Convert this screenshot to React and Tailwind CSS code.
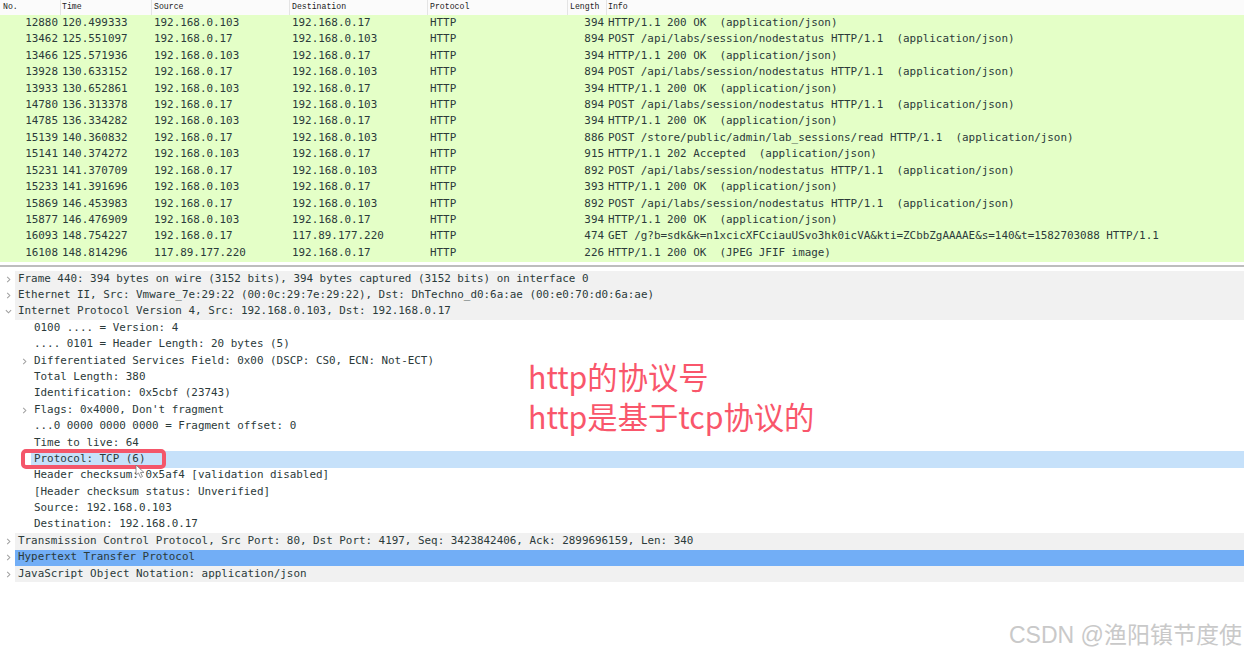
const mono = "font-['DejaVu_Sans_Mono','Liberation_Mono',monospace]";

const packets = [
  ["12880", "120.499333", "192.168.0.103", "192.168.0.17", "394", "HTTP/1.1 200 OK  (application/json)"],
  ["13462", "125.551097", "192.168.0.17", "192.168.0.103", "894", "POST /api/labs/session/nodestatus HTTP/1.1  (application/json)"],
  ["13466", "125.571936", "192.168.0.103", "192.168.0.17", "394", "HTTP/1.1 200 OK  (application/json)"],
  ["13928", "130.633152", "192.168.0.17", "192.168.0.103", "894", "POST /api/labs/session/nodestatus HTTP/1.1  (application/json)"],
  ["13933", "130.652861", "192.168.0.103", "192.168.0.17", "394", "HTTP/1.1 200 OK  (application/json)"],
  ["14780", "136.313378", "192.168.0.17", "192.168.0.103", "894", "POST /api/labs/session/nodestatus HTTP/1.1  (application/json)"],
  ["14785", "136.334282", "192.168.0.103", "192.168.0.17", "394", "HTTP/1.1 200 OK  (application/json)"],
  ["15139", "140.360832", "192.168.0.17", "192.168.0.103", "886", "POST /store/public/admin/lab_sessions/read HTTP/1.1  (application/json)"],
  ["15141", "140.374272", "192.168.0.103", "192.168.0.17", "915", "HTTP/1.1 202 Accepted  (application/json)"],
  ["15231", "141.370709", "192.168.0.17", "192.168.0.103", "892", "POST /api/labs/session/nodestatus HTTP/1.1  (application/json)"],
  ["15233", "141.391696", "192.168.0.103", "192.168.0.17", "393", "HTTP/1.1 200 OK  (application/json)"],
  ["15869", "146.453983", "192.168.0.17", "192.168.0.103", "892", "POST /api/labs/session/nodestatus HTTP/1.1  (application/json)"],
  ["15877", "146.476909", "192.168.0.103", "192.168.0.17", "394", "HTTP/1.1 200 OK  (application/json)"],
  ["16093", "148.754227", "192.168.0.17", "117.89.177.220", "474", "GET /g?b=sdk&k=n1xcicXFCciauUSvo3hk0icVA&kti=ZCbbZgAAAAE&s=140&t=1582703088 HTTP/1.1"],
  ["16108", "148.814296", "117.89.177.220", "192.168.0.17", "226", "HTTP/1.1 200 OK  (JPEG JFIF image)"],
];

const details = [
  { text: "Frame 440: 394 bytes on wire (3152 bits), 394 bytes captured (3152 bits) on interface 0", arrow: "right", top: true },
  { text: "Ethernet II, Src: Vmware_7e:29:22 (00:0c:29:7e:29:22), Dst: DhTechno_d0:6a:ae (00:e0:70:d0:6a:ae)", arrow: "right", top: true },
  { text: "Internet Protocol Version 4, Src: 192.168.0.103, Dst: 192.168.0.17", arrow: "down", top: true },
  { text: "0100 .... = Version: 4" },
  { text: ".... 0101 = Header Length: 20 bytes (5)" },
  { text: "Differentiated Services Field: 0x00 (DSCP: CS0, ECN: Not-ECT)", arrow: "right" },
  { text: "Total Length: 380" },
  { text: "Identification: 0x5cbf (23743)" },
  { text: "Flags: 0x4000, Don't fragment", arrow: "right" },
  { text: "...0 0000 0000 0000 = Fragment offset: 0" },
  { text: "Time to live: 64" },
  { text: "Protocol: TCP (6)", selected: true },
  { text: "Header checksum: 0x5af4 [validation disabled]" },
  { text: "[Header checksum status: Unverified]" },
  { text: "Source: 192.168.0.103" },
  { text: "Destination: 192.168.0.17" },
  { text: "Transmission Control Protocol, Src Port: 80, Dst Port: 4197, Seq: 3423842406, Ack: 2899696159, Len: 340", arrow: "right", top: true },
  { text: "Hypertext Transfer Protocol", arrow: "right", top: true, active: true },
  { text: "JavaScript Object Notation: application/json", arrow: "right", top: true },
];

function Arrow({ dir }) {
  return (
    <svg width="7" height="7" viewBox="0 0 8 8" fill="none" stroke="#a0a0a0" strokeWidth="1.2">
      {dir === "right" ? <path d="M2.5 1 L5.5 4 L2.5 7" /> : <path d="M1 2.5 L4 5.5 L7 2.5" />}
    </svg>
  );
}

function DetailRow({ row }) {
  const bg = row.active ? "bg-[#72aef6]" : row.selected ? "bg-[#c6e1fa]" : row.top ? "bg-[#f1f1f1]" : "bg-white";
  return (
    <div className="flex h-[16.4px] items-center">
      <div className={`flex h-full shrink-0 items-center justify-end pr-[3px] ${row.top ? "w-[15px]" : "w-[31px]"}`}>
        {row.arrow && <Arrow dir={row.arrow} />}
      </div>
      <div className={`flex h-full flex-1 items-center whitespace-pre pl-[3px] ${bg}`}>{row.text}</div>
    </div>
  );
}

export default function App() {
  return (
    <div className={`relative h-[655px] w-[1244px] overflow-hidden bg-white text-[10.9px] leading-none text-[#2b3a3a] ${mono}`}>
      {/* Packet list */}
      <div className="grid h-[15px] grid-cols-[61px_91px_138px_138px_140px_39px_1fr] bg-[#fbfbfb] font-['Liberation_Mono',monospace] text-[8.2px] text-[#222]">
        <div className="flex items-center border-r border-[#e4e4e4] pl-[3px]">No.</div>
        <div className="flex items-center border-r border-[#e4e4e4] pl-[1px]">Time</div>
        <div className="flex items-center border-r border-[#e4e4e4] pl-[2px]">Source</div>
        <div className="flex items-center border-r border-[#e4e4e4] pl-[2px]">Destination</div>
        <div className="flex items-center border-r border-[#e4e4e4] pl-[2px]">Protocol</div>
        <div className="flex items-center border-r border-[#e4e4e4] pl-[2px]">Length</div>
        <div className="flex items-center pl-[1px]">Info</div>
      </div>
      <div className="bg-[#e4ffc7]">
        {packets.map((p) => (
          <div key={p[0]} className="grid h-[16.45px] grid-cols-[61px_91px_138px_138px_140px_39px_1fr] items-center whitespace-pre">
            <div className="pr-[3px] text-right">{p[0]}</div>
            <div className="pl-[1px]">{p[1]}</div>
            <div className="pl-[2px]">{p[2]}</div>
            <div className="pl-[2px]">{p[3]}</div>
            <div className="pl-[2px]">HTTP</div>
            <div className="pr-[3px] text-right">{p[4]}</div>
            <div className="pl-[1px]">{p[5]}</div>
          </div>
        ))}
      </div>

      {/* Pane splitter */}
      <div className="mt-[3px] h-[2px] bg-[#bdbdbd]" />

      {/* Packet details */}
      <div className="mt-[4.3px]">
        {details.map((row) => (
          <DetailRow key={row.text} row={row} />
        ))}
      </div>

      {/* Video annotations */}
      <div className="absolute left-[21px] top-[449px] h-[20px] w-[145px] rounded-[5px] border-4 border-[#f4566a]" />
      <svg className="absolute left-[135px] top-[464px]" width="12" height="15" viewBox="0 0 12 15" fill="white" stroke="#777" strokeWidth="0.8">
        <path d="M1 1 L1 11 L3.5 9 L5.5 13.5 L7.5 12.5 L5.5 8.5 L9 8.5 Z" />
      </svg>
      <div className="absolute left-[528px] top-[356px] font-['Noto_Sans_CJK_SC','Liberation_Sans',sans-serif] text-[30.3px] leading-[40px] text-[#f9566b]">
        <div>http的协议号</div>
        <div>http是基于tcp协议的</div>
      </div>
      <div className="absolute left-[1009px] top-[621px] font-['Liberation_Sans','Noto_Sans_CJK_SC',sans-serif] text-[23px] leading-[28px] text-[#c9c9c9]">
        CSDN @渔阳镇节度使
      </div>
    </div>
  );
}
